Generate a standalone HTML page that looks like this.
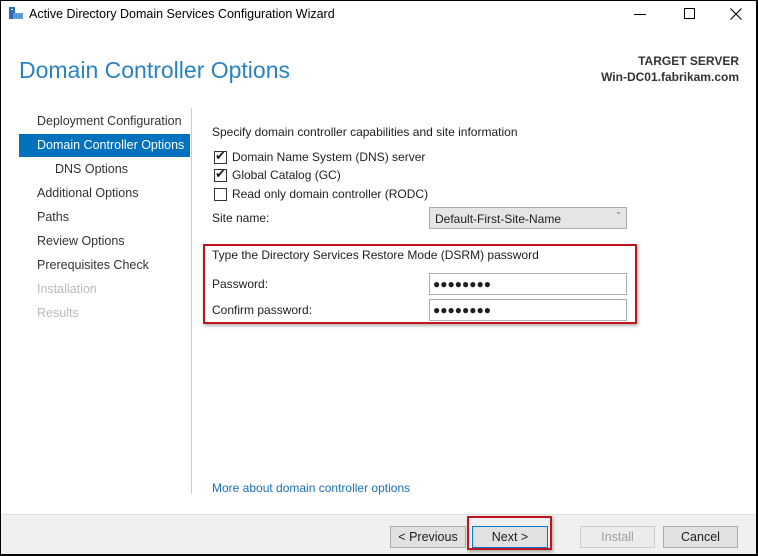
<!DOCTYPE html>
<html><head><meta charset="utf-8"><style>
*{margin:0;padding:0;box-sizing:border-box}
body{width:758px;height:556px;overflow:hidden;background:#000;font-family:"Liberation Sans",sans-serif;font-size:12px;color:#1e1e1e;position:relative}
.win{position:absolute;left:1px;top:1px;width:755px;height:553px;background:#fff;overflow:hidden}
.a{position:absolute;white-space:nowrap}
.nav{position:absolute;left:36px;font-size:12.5px;color:#333}
.cb{position:absolute;left:213px;width:13px;height:13px;border:1px solid #333;background:#fff}
.btn{position:absolute;top:525px;height:22px;border:1px solid #adadad;background:#e1e1e1;text-align:center;line-height:20px;font-size:12.5px}
.inp{position:absolute;left:428px;width:198px;height:22px;border:1px solid #abadb3;background:#fff;font-size:12px;line-height:20px;padding-left:3px}
</style></head><body><div class="win">
<svg class="a" style="left:7px;top:5px" width="16" height="14" viewBox="0 0 16 14"><rect x="1" y="1" width="6" height="12" fill="#2a6fb0"/><rect x="5" y="7" width="10" height="6" fill="#5a9bd5"/><rect x="3" y="3" width="2" height="1" fill="#fff"/></svg>
<div class="a" style="left:28px;top:6px;font-size:12.5px;color:#000">Active Directory Domain Services Configuration Wizard</div>
<div class="a" style="left:633px;top:13px;width:12px;height:1px;background:#000"></div>
<div class="a" style="left:683px;top:7px;width:11px;height:11px;border:1px solid #000"></div>
<svg class="a" style="left:729px;top:7px" width="12" height="12" viewBox="0 0 12 12"><path d="M0.5 0.5L11.5 11.5M11.5 0.5L0.5 11.5" stroke="#000" stroke-width="1.1"/></svg>
<div class="a" style="left:18px;top:56px;font-size:23px;color:#2a83c0">Domain Controller Options</div>
<div class="a" style="right:17px;top:52px;font-size:12px;font-weight:bold;color:#333;text-align:right;line-height:16px">TARGET SERVER<br>Win-DC01.fabrikam.com</div>
<div class="nav" style="top:113px">Deployment Configuration</div>
<div class="a" style="left:18px;top:133px;width:171px;height:23px;background:#0071bc"></div>
<div class="nav" style="top:137px;color:#fff">Domain Controller Options</div>
<div class="nav" style="top:161px;left:54px">DNS Options</div>
<div class="nav" style="top:185px">Additional Options</div>
<div class="nav" style="top:209px">Paths</div>
<div class="nav" style="top:233px">Review Options</div>
<div class="nav" style="top:257px">Prerequisites Check</div>
<div class="nav" style="top:281px;color:#bbb">Installation</div>
<div class="nav" style="top:305px;color:#bbb">Results</div>
<div class="a" style="left:190px;top:107px;width:1px;height:386px;background:#ccc"></div>
<div class="a" style="left:211px;top:124px">Specify domain controller capabilities and site information</div>
<div class="cb" style="top:150px"></div><div class="a" style="left:214px;top:147px;font-size:13px">&#10004;</div>
<div class="a" style="left:231px;top:149px">Domain Name System (DNS) server</div>
<div class="cb" style="top:168px"></div><div class="a" style="left:214px;top:165px;font-size:13px">&#10004;</div>
<div class="a" style="left:231px;top:167px">Global Catalog (GC)</div>
<div class="cb" style="top:187px"></div>
<div class="a" style="left:231px;top:186px">Read only domain controller (RODC)</div>
<div class="a" style="left:211px;top:210px">Site name:</div>
<div class="a" style="left:428px;top:206px;width:198px;height:22px;border:1px solid #adadad;background:#e5e5e5;padding:4px 5px">Default-First-Site-Name<span style="position:absolute;right:6px;top:3px;font-size:9px">&#711;</span></div>
<div class="a" style="left:202px;top:243px;width:434px;height:80px;border:2px solid #c0141c;box-shadow:1px 2px 3px rgba(0,0,0,.3)"></div>
<div class="a" style="left:211px;top:247px">Type the Directory Services Restore Mode (DSRM) password</div>
<div class="a" style="left:211px;top:276px">Password:</div>
<div class="inp" style="top:272px">&#9679;&#9679;&#9679;&#9679;&#9679;&#9679;&#9679;&#9679;</div>
<div class="a" style="left:211px;top:302px">Confirm password:</div>
<div class="inp" style="top:298px">&#9679;&#9679;&#9679;&#9679;&#9679;&#9679;&#9679;&#9679;</div>
<div class="a" style="left:211px;top:480px;color:#1a6fb5">More about domain controller options</div>
<div class="a" style="left:0;top:513px;width:755px;height:40px;background:#f0f0f0;border-top:1px solid #dfdfdf"></div>
<div class="btn" style="left:389px;width:76px">&lt; Previous</div>
<div class="a" style="left:466px;top:515px;width:85px;height:34px;border:2px solid #c0141c;box-shadow:1px 2px 3px rgba(0,0,0,.3)"></div>
<div class="btn" style="left:471px;width:76px;border-color:#0078d7">Next &gt;</div>
<div class="btn" style="left:579px;width:75px;background:#ececec;border-color:#ccc;color:#a0a0a0">Install</div>
<div class="btn" style="left:662px;width:75px">Cancel</div>
</div></body></html>
